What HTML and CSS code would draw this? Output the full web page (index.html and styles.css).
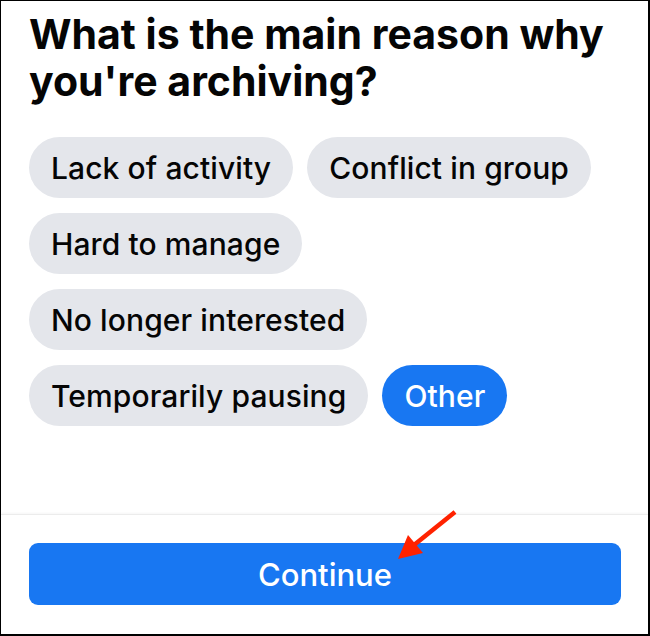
FILE: index.html
```html
<!DOCTYPE html>
<html>
<head>
<meta charset="utf-8">
<link rel="stylesheet" href="styles.css">
</head>
<body>
<div class="frame">
  <main class="content">
    <h1 class="title">What is the main reason why you're archiving?</h1>
    <div class="chips">
      <div class="chip-row">
        <span class="chip">Lack of activity</span>
        <span class="chip">Conflict in group</span>
      </div>
      <div class="chip-row">
        <span class="chip">Hard to manage</span>
      </div>
      <div class="chip-row">
        <span class="chip">No longer interested</span>
      </div>
      <div class="chip-row">
        <span class="chip">Temporarily pausing</span>
        <span class="chip chip-active">Other</span>
      </div>
    </div>
  </main>
  <footer class="footer">
    <button class="continue">Continue</button>
  </footer>
  <svg class="arrow" width="650" height="636" viewBox="0 0 650 636">
    <line x1="455" y1="512" x2="414" y2="545" stroke="#ff2200" stroke-width="4.5" stroke-linecap="butt"/>
    <polygon points="398,559 408,535 423,553" fill="#ff2200"/>
  </svg>
</div>
</body>
</html>
```

FILE: styles.css
```css
html, body {
  margin: 0;
  padding: 0;
  background: #ffffff;
}

.frame {
  position: relative;
  width: 650px;
  height: 636px;
  box-sizing: border-box;
  border-style: solid;
  border-color: #000000;
  border-width: 1px 2px 2px 1px;
  display: flex;
  flex-direction: column;
  font-family: Inter, "Liberation Sans", sans-serif;
  overflow: hidden;
}

.content {
  flex: 1;
  padding: 10px 28px 0 28px;
}

.title {
  margin: 0;
  font-size: 41px;
  line-height: 47px;
  font-weight: 700;
  color: #050505;
  letter-spacing: 0;
}

.chips {
  display: flex;
  flex-direction: column;
  row-gap: 15px;
  margin-top: 32px;
}

.chip-row {
  display: flex;
  column-gap: 14px;
}

.chip {
  display: inline-flex;
  align-items: center;
  height: 61px;
  padding: 0 22px;
  border-radius: 31px;
  background: #e4e6eb;
  color: #050505;
  font-size: 30px;
  font-weight: 500;
  letter-spacing: 0.1px;
}

.chip-active {
  background: #1877f2;
  color: #ffffff;
}

.footer {
  border-top: 1px solid #ececec;
  box-shadow: 0 -1px 2px rgba(0, 0, 0, 0.04);
  padding: 28px 27px 29px 28px;
}

.continue {
  display: block;
  width: 100%;
  height: 62px;
  border: none;
  border-radius: 9px;
  background: #1877f2;
  color: #ffffff;
  font-family: Inter, "Liberation Sans", sans-serif;
  font-size: 31px;
  font-weight: 500;
  padding: 0;
}

.arrow {
  position: absolute;
  left: -1px;
  top: -1px;
  pointer-events: none;
}
```
